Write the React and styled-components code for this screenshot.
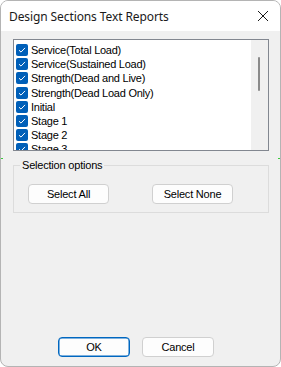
import React from 'react';
import styled, { createGlobalStyle } from 'styled-components';

const Global = createGlobalStyle`
  html, body {
    margin: 0;
    padding: 0;
    background: #ffffff;
  }
  body {
    font-family: "Liberation Sans", Arial, sans-serif;
  }
`;

const Window = styled.div`
  position: relative;
  box-sizing: border-box;
  width: 281px;
  height: 367px;
  border: 1px solid #b4b4b4;
  border-radius: 8px;
  overflow: hidden;
  display: flex;
  flex-direction: column;
  background: #f0f0f0;
`;

const TitleBar = styled.div`
  height: 30px;
  flex: none;
  background: #ffffff;
  display: flex;
  align-items: center;
  justify-content: space-between;
  padding: 0 8px 0 8px;
  box-sizing: border-box;
`;

const Title = styled.span`
  font-family: "Noto Sans", "Open Sans", sans-serif;
  font-size: 12px;
  color: #1a1a1a;
  letter-spacing: -0.1px;
  padding-top: 1px;
`;

const CloseBtn = styled.div`
  width: 12px;
  height: 12px;
  margin-right: 3px;
  display: flex;
`;

const Body = styled.div`
  flex: 1;
  display: flex;
  flex-direction: column;
  padding: 8px 11px 9px 12px;
  font-size: 11px;
  color: #000;
`;

const ListBox = styled.div`
  box-sizing: border-box;
  height: 112px;
  border: 1px solid #828790;
  background: #ffffff;
  display: flex;
  overflow: hidden;
`;

const Items = styled.div`
  flex: 1;
  padding: 3px 0 0 2px;
`;

const Row = styled.div`
  height: 14.2px;
  display: flex;
  align-items: center;
  gap: 3px;
  white-space: nowrap;
  letter-spacing: -0.25px;
`;

const Check = styled.span`
  width: 12px;
  height: 12px;
  border-radius: 2px;
  background: #005fb8;
  display: flex;
  align-items: center;
  justify-content: center;
  flex: none;
`;

const ScrollTrack = styled.div`
  width: 17px;
  flex: none;
  background: #f0f0f0;
  position: relative;
`;

const Thumb = styled.div`
  position: absolute;
  left: 7px;
  top: 17px;
  width: 2px;
  height: 34px;
  background: #8a8a8a;
  border-radius: 1px;
`;

const Group = styled.fieldset`
  margin: 8px 0 0 0;
  padding: 0;
  border: 1px solid #dcdcdc;
  min-width: 0;
`;

const Legend = styled.legend`
  margin-left: 6px;
  padding: 0 2px;
  font-size: 11px;
  letter-spacing: -0.2px;
`;

const ButtonRow = styled.div`
  display: flex;
  gap: 43px;
  padding: 13px 0 8px 14px;
`;

const Button = styled.button`
  box-sizing: border-box;
  width: ${(p) => p.$w || 81}px;
  height: 20px;
  border: 1px solid ${(p) => (p.$primary ? '#0067c0' : '#d0d0d0')};
  border-radius: 4px;
  background: #fdfdfd;
  font-family: "Liberation Sans", Arial, sans-serif;
  font-size: 11px;
  letter-spacing: -0.2px;
  color: #000;
  padding: 0;
  box-shadow: ${(p) => (p.$primary ? 'inset 0 0 0 0.5px #0067c0' : 'none')};
`;

const Footer = styled.div`
  margin-top: auto;
  display: flex;
  gap: 12px;
  padding-left: 45px;
`;

const Tick = styled.div`
  position: absolute;
  top: 157px;
  ${(p) => (p.$right ? 'right: 0;' : 'left: 0;')}
  width: 2px;
  height: 1px;
  background: #3cc83c;
`;

const items = [
  'Service(Total Load)',
  'Service(Sustained Load)',
  'Strength(Dead and Live)',
  'Strength(Dead Load Only)',
  'Initial',
  'Stage 1',
  'Stage 2',
  'Stage 3',
];

const CheckMark = () => (
  <svg width="8" height="8" viewBox="0 0 8 8">
    <path d="M1 4.2 L3 6.1 L7 1.9" fill="none" stroke="#ffffff" strokeWidth="1" />
  </svg>
);

export default function App() {
  return (
    <>
      <Global />
      <Window>
        <TitleBar>
          <Title>Design Sections Text Reports</Title>
          <CloseBtn>
            <svg width="12" height="12" viewBox="0 0 12 12">
              <path d="M1 1 L11 11 M11 1 L1 11" stroke="#1a1a1a" strokeWidth="1" />
            </svg>
          </CloseBtn>
        </TitleBar>
        <Body>
          <ListBox>
            <Items>
              {items.map((t) => (
                <Row key={t}>
                  <Check>
                    <CheckMark />
                  </Check>
                  {t}
                </Row>
              ))}
            </Items>
            <ScrollTrack>
              <Thumb />
            </ScrollTrack>
          </ListBox>
          <Group>
            <Legend>Selection options</Legend>
            <ButtonRow>
              <Button>Select All</Button>
              <Button>Select None</Button>
            </ButtonRow>
          </Group>
          <Footer>
            <Button $w={72} $primary>OK</Button>
            <Button $w={72}>Cancel</Button>
          </Footer>
        </Body>
        <Tick />
        <Tick $right />
      </Window>
    </>
  );
}
